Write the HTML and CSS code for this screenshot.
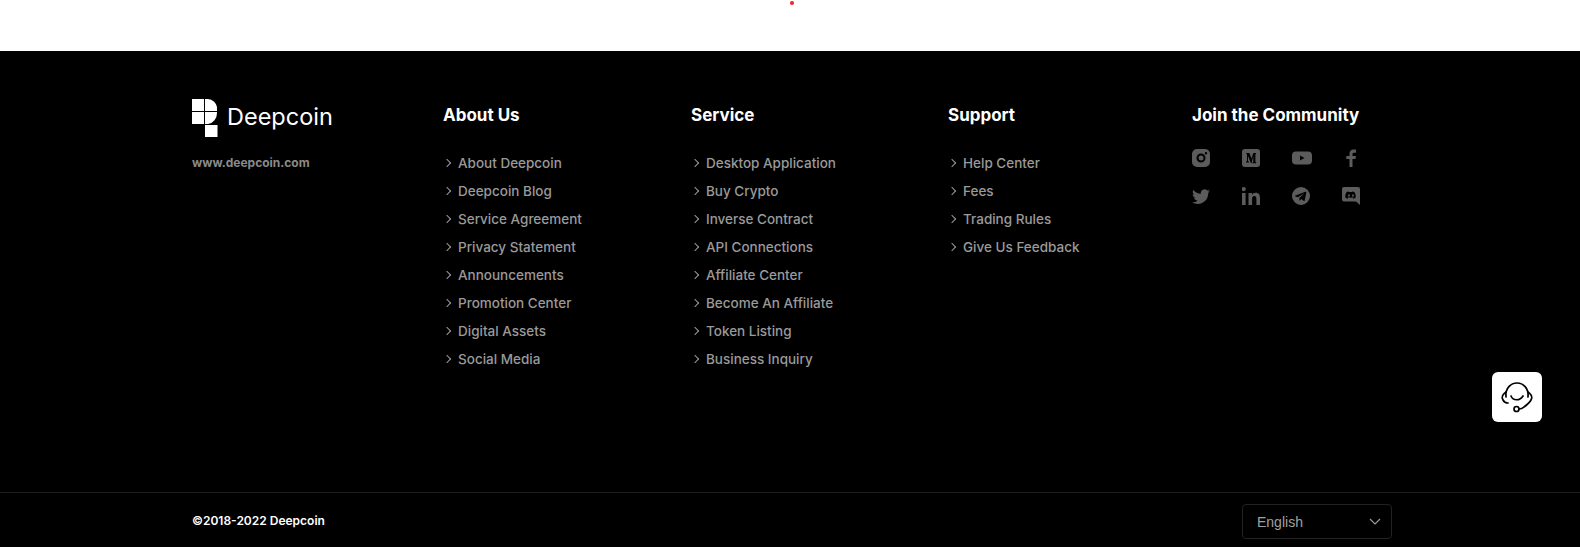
FILE: index.html
```html
<!DOCTYPE html>
<html lang="en">

<head>
	<meta charset="UTF-8">
	<title>Deepcoin</title>
	<link rel="stylesheet" href="styles.css">
</head>

<body>
	<div class="top">
		<span class="dot"></span>
	</div>
	<div class="footer">
		<div class="footer-main">
			<div class="brand">
				<div class="logo">
					<svg width="26" height="38" viewBox="0 0 26 38" fill="#fff">
						<rect x="0" y="0" width="12" height="12"></rect>
						<rect x="0" y="13" width="12" height="12"></rect>
						<path d="M13 0h3a10 10 0 0 1 9 8v4h-12z"></path>
						<path d="M13 13h12v1a11 11 0 0 1-9 11h-3z"></path>
						<rect x="13" y="26" width="12.500" height="12"></rect>
					</svg>
					<span class="logo-name">Deepcoin</span>
				</div>
				<a class="site" href="#">www.deepcoin.com</a>
			</div>
			<div class="col">
				<h3>About Us</h3>
				<ul>
					<li><a href="#">About Deepcoin</a></li>
					<li><a href="#">Deepcoin Blog</a></li>
					<li><a href="#">Service Agreement</a></li>
					<li><a href="#">Privacy Statement</a></li>
					<li><a href="#">Announcements</a></li>
					<li><a href="#">Promotion Center</a></li>
					<li><a href="#">Digital Assets</a></li>
					<li><a href="#">Social Media</a></li>
				</ul>
			</div>
			<div class="col">
				<h3>Service</h3>
				<ul>
					<li><a href="#">Desktop Application</a></li>
					<li><a href="#">Buy Crypto</a></li>
					<li><a href="#">Inverse Contract</a></li>
					<li><a href="#">API Connections</a></li>
					<li><a href="#">Affiliate Center</a></li>
					<li><a href="#">Become An Affiliate</a></li>
					<li><a href="#">Token Listing</a></li>
					<li><a href="#">Business Inquiry</a></li>
				</ul>
			</div>
			<div class="col">
				<h3>Support</h3>
				<ul>
					<li><a href="#">Help Center</a></li>
					<li><a href="#">Fees</a></li>
					<li><a href="#">Trading Rules</a></li>
					<li><a href="#">Give Us Feedback</a></li>
				</ul>
			</div>
			<div class="col">
				<h3>Join the Community</h3>
				<div class="social">
					<!-- instagram -->
					<svg viewBox="0 0 18 18"><path fill-rule="evenodd" d="M5 0h8a5 5 0 0 1 5 5v8a5 5 0 0 1-5 5H5a5 5 0 0 1-5-5V5a5 5 0 0 1 5-5zm4 4.500a4.500 4.500 0 1 0 0 9 4.500 4.500 0 0 0 0-9zm0 2a2.500 2.500 0 1 1 0 5 2.500 2.500 0 0 1 0-5zM14 3a1.200 1.200 0 1 0 0 2.400A1.200 1.200 0 0 0 14 3z"></path></svg>
					<!-- medium -->
					<svg viewBox="0 0 18 18"><path fill-rule="evenodd" d="M3 0h12a3 3 0 0 1 3 3v12a3 3 0 0 1-3 3H3a3 3 0 0 1-3-3V3a3 3 0 0 1 3-3zm1 4v.6l1 .6v6.800l-1 .8v.6h3v-.6l-1-.8V7l3 7.200h.5L11.300 7v5.800l-.8.8v.6h3.700v-.6l-.8-.8V5.200l.8-.6V4h-2.800L9.500 9.500 7.400 4z"></path></svg>
					<!-- youtube -->
					<svg class="wide" viewBox="0 0 20 18"><path fill-rule="evenodd" d="M4 2.500h12a4 4 0 0 1 4 4v5a4 4 0 0 1-4 4H4a4 4 0 0 1-4-4v-5a4 4 0 0 1 4-4zM8 6.500v5l4.500-2.500z"></path></svg>
					<!-- facebook -->
					<svg viewBox="0 0 18 18"><path d="M10.500 18v-8h3l.4-3h-3.400V5.200c0-.9.300-1.500 1.600-1.500H14V.6C13.600.5 12.600.4 11.500.4 9 .4 7.500 2.100 7.500 4.900V7H4.300v3h3.200v8z"></path></svg>
					<!-- twitter -->
					<svg viewBox="0 0 18 18"><path d="M18 3.900c-.7.300-1.400.5-2.100.6.800-.5 1.300-1.200 1.600-2-.7.400-1.500.7-2.300.9a3.700 3.700 0 0 0-6.300 3.400C5.800 6.600 3.100 5.100 1.300 2.900c-1 1.700-.5 3.800 1.100 4.900-.6 0-1.200-.2-1.700-.5 0 1.800 1.300 3.300 3 3.700-.5.100-1.100.2-1.700.1.500 1.500 1.900 2.500 3.500 2.600A7.400 7.400 0 0 1 0 15.200a10.500 10.500 0 0 0 16.200-9.300c.7-.5 1.300-1.200 1.800-2z"></path></svg>
					<!-- linkedin -->
					<svg viewBox="0 0 18 18"><path d="M0 6h3.600v12H0zM1.800 0a2.100 2.100 0 1 1 0 4.200 2.100 2.100 0 0 1 0-4.200zM6.500 6h3.400v1.700c.6-1.100 1.900-2 3.700-2 3.500 0 4.400 2.200 4.400 5.400V18h-3.600v-6c0-1.500-.3-3-2.100-3-1.900 0-2.200 1.400-2.200 2.900V18H6.500z"></path></svg>
					<!-- telegram -->
					<svg viewBox="0 0 18 18"><path fill-rule="evenodd" d="M9 0a9 9 0 1 1 0 18A9 9 0 0 1 9 0zm4.400 4.700L3.500 8.500c-.6.300-.6.700 0 .9l2.500.8 5.800-3.700c.3-.2.500-.1.300.1L7.400 11v2.500c.3 0 .5-.1.700-.3l1.200-1.200 2.500 1.900c.5.300.8.100.9-.4l1.600-8c.2-.7-.3-1-.9-.8z"></path></svg>
					<!-- discord -->
					<svg viewBox="0 0 18 18"><path fill-rule="evenodd" d="M2 0h14a2 2 0 0 1 2 2v16l-4-3.500H2a2 2 0 0 1-2-2V2a2 2 0 0 1 2-2zm4.800 4.500c-1 .1-1.700.4-2.300.8-1 1.700-1.400 3.500-1.200 5.300.8.600 1.700 1 2.500 1.100l.6-.9c-.4-.1-.7-.3-1-.5l.2-.2c1.900.9 3.900.9 5.800 0l.2.200c-.3.200-.7.400-1 .5l.6.900c.8-.2 1.700-.5 2.500-1.100.2-2.100-.3-3.900-1.200-5.300-.7-.4-1.500-.7-2.300-.8l-.3.600a8 8 0 0 0-2.800 0zM7 7.500c.6 0 1 .5 1 1.100 0 .6-.5 1.100-1 1.100s-1-.5-1-1.100c0-.6.400-1.100 1-1.100zm4 0c.6 0 1 .5 1 1.100 0 .6-.5 1.100-1 1.100s-1-.5-1-1.100c0-.6.400-1.100 1-1.100z"></path></svg>
				</div>
			</div>
		</div>
		<div class="footer-bottom">
			<div class="bottom-inner">
				<span class="copyright">©2018-2022 Deepcoin</span>
				<div class="lang">
					<span>English</span>
					<svg width="12" height="7" viewBox="0 0 12 7" fill="none" stroke="#9a9a9a" stroke-width="1.200"><path d="M1 1l5 5 5-5"></path></svg>
				</div>
			</div>
		</div>
	</div>
	<a class="help" href="#">
		<svg width="36" height="36" viewBox="0 0 36 36" fill="none" stroke="#000" stroke-width="1.700" stroke-linecap="round">
			<path d="M7 18C6 9 12 4 18 4s12 5 11 14"></path>
			<path d="M7 13C4 15 2 18 4 21c1 2 3 3 5 3"></path>
			<path d="M29 13c3 2 5 5 3 8-1 2-3 4-7 7-1 1-3 2-5 2"></path>
			<path d="M12 17c2 5 9 5 12 0"></path>
			<circle cx="17.500" cy="30" r="2.500"></circle>
		</svg>
	</a>
</body>

</html>
```
FILE: styles.css
```css
* {
	margin: 0;
	padding: 0;
	box-sizing: border-box;
}

html,
body {
	height: 100%;
	overflow: hidden;
}

body {
	background: #000;
	font-family: Inter, "Liberation Sans", sans-serif;
}

a {
	text-decoration: none;
}

li {
	list-style: none;
}

.top {
	height: 51px;
	background: #fff;
	padding: 1px 0 0 790px;
}

.dot {
	display: block;
	width: 4px;
	height: 4px;
	border-radius: 50%;
	background: #f0202c;
}

.footer {
	height: 496px;
	background: #000;
	display: flex;
	flex-direction: column;
}

.footer-main {
	flex: 1;
	width: 1200px;
	margin-left: 192px;
	padding-top: 48px;
	display: grid;
	grid-template-columns: 251px 248px 257px 244px 1fr;
}

.logo {
	display: flex;
	align-items: center;
	height: 38px;
	gap: 9px;
}

.logo-name {
	color: #fff;
	font-size: 23.500px;
	line-height: 36px;
	padding-bottom: 3px;
}

.site {
	display: block;
	margin-top: 17px;
	color: #8a8a8a;
	font-size: 12px;
	line-height: 18px;
	font-weight: 700;
}

.col h3 {
	color: #fff;
	font-size: 17px;
	line-height: 32px;
	font-weight: 700;
}

.col ul {
	margin-top: 17px;
}

.col li {
	height: 28px;
	line-height: 28px;
	padding-left: 15px;
	position: relative;
}

.col li:before {
	content: "";
	position: absolute;
	left: 1px;
	top: 12px;
	width: 5px;
	height: 5px;
	border-top: 1px solid #999;
	border-right: 1px solid #999;
	transform: rotate(45deg);
}

.col li a {
	color: #9a9a9a;
	font-size: 13.500px;
	font-weight: 500;
}

.social {
	margin-top: 18px;
	display: grid;
	grid-template-columns: repeat(4, 50px);
	row-gap: 20px;
}

.social svg {
	display: block;
	width: 18px;
	height: 18px;
	fill: #5c5c5c;
}

.social svg.wide {
	width: 20px;
}

.footer-bottom {
	height: 55px;
	border-top: 1px solid #1c1c1c;
}

.bottom-inner {
	width: 1200px;
	margin-left: 192px;
	padding-top: 11px;
	display: flex;
	justify-content: space-between;
}

.copyright {
	color: #fff;
	font-size: 12px;
	line-height: 34px;
	font-weight: 600;
}

.lang {
	width: 150px;
	height: 35px;
	border: 1px solid #222;
	border-radius: 4px;
	padding: 0 10px 0 14px;
	display: flex;
	align-items: center;
	justify-content: space-between;
	color: #a0a0a0;
	font-family: "Liberation Sans", Arial, sans-serif;
	font-size: 14px;
}

.help {
	position: fixed;
	left: 1492px;
	top: 372px;
	width: 50px;
	height: 50px;
	border-radius: 6px;
	background: #fff;
	display: flex;
	align-items: center;
	justify-content: center;
}
```
